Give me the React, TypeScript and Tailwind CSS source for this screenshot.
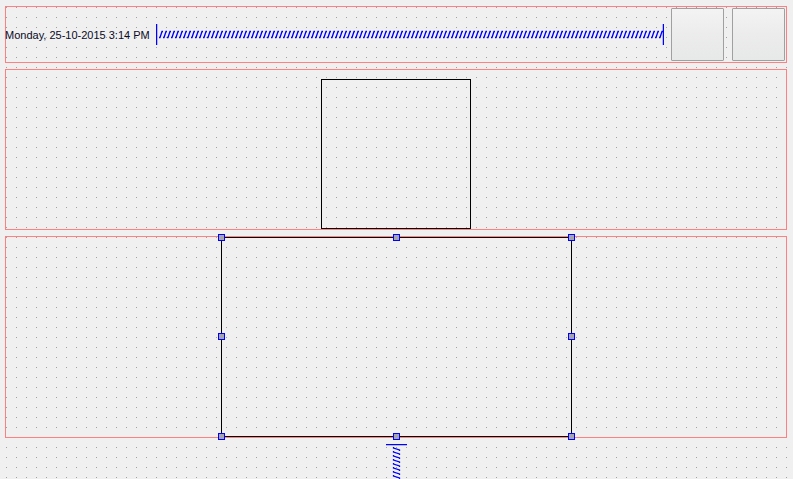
import React from "react";

function HSpring({ width }: { width: number }) {
  const segs: string[] = [];
  for (let x = 3; x < width - 4; x += 4) {
    segs.push(`M${x} 13.5 L${x + 1} 13.5 L${x + 3} 7.5 L${x + 4} 7.5`);
  }
  return (
    <svg width={width} height={21} className="block shrink-0">
      <line x1={0.5} y1={0} x2={0.5} y2={21} stroke="#0000ff" strokeWidth={1.5} />
      <line x1={width - 0.5} y1={0} x2={width - 0.5} y2={21} stroke="#0000ff" strokeWidth={1.5} />
      <path d={segs.join(" ")} stroke="#0000ff" strokeWidth={1.3} fill="none" />
    </svg>
  );
}

function VSpring({ height }: { height: number }) {
  const segs: string[] = [];
  for (let y = 3; y < height; y += 4) {
    segs.push(`M7.5 ${y} L7.5 ${y + 1} L13.5 ${y + 3} L13.5 ${y + 4}`);
  }
  return (
    <svg width={21} height={height} className="block shrink-0">
      <line x1={0} y1={0.5} x2={21} y2={0.5} stroke="#0000ff" strokeWidth={1.5} />
      <path d={segs.join(" ")} stroke="#0000ff" strokeWidth={1.3} fill="none" />
    </svg>
  );
}

function Handle({ className }: { className: string }) {
  return (
    <div
      className={`absolute w-[7px] h-[7px] border border-[#0000ff] bg-[#a4a4ac] ${className}`}
    />
  );
}

function ToolButton() {
  return (
    <div className="w-[53px] h-[53px] shrink-0 border border-[#a0a0a0] rounded-[1px] bg-[linear-gradient(#f3f3f3,#ececec_50%,#e7e8e8)]" />
  );
}

export default function App() {
  return (
    <div
      className="w-[793px] h-[479px] overflow-hidden flex flex-col pt-[6px] px-[5px] gap-[6px] bg-[#f0f0f0] bg-[linear-gradient(90deg,transparent_1px,#f0f0f0_1px),linear-gradient(#a0a0a0_1px,#f0f0f0_1px)] bg-[size:10px_10px] bg-[position:6px_7px]"
      style={{ fontFamily: '"Liberation Sans", Arial, sans-serif' }}
    >
      {/* Frame 1 */}
      <div className="w-[782px] h-[57px] shrink-0 border border-[#ff8080] flex items-center">
        <div className="w-[150px] shrink-0 ml-[-1px] mr-[1px] text-[11px] leading-[14px] text-[#0a0a28] whitespace-nowrap">
          Monday, 25-10-2015 3:14 PM
        </div>
        <HSpring width={508} />
        <div className="ml-[7px] flex gap-[8px] mr-[1px]">
          <ToolButton />
          <ToolButton />
        </div>
      </div>

      {/* Frame 2 */}
      <div className="w-[782px] h-[161px] shrink-0 border border-[#ff8080] flex justify-center items-end">
        <div className="w-[150px] h-[150px] border border-black" />
      </div>

      {/* Frame 3 */}
      <div className="w-[782px] h-[202px] shrink-0 border border-[#ff8080] flex">
        <div className="relative ml-[215px] w-[351px] h-[200px] border border-black">
          <Handle className="left-[-4px] top-[-4px]" />
          <Handle className="left-[171px] top-[-4px]" />
          <Handle className="right-[-4px] top-[-4px]" />
          <Handle className="left-[-4px] top-[95px]" />
          <Handle className="right-[-4px] top-[95px]" />
          <Handle className="left-[-4px] bottom-[-4px]" />
          <Handle className="left-[171px] bottom-[-4px]" />
          <Handle className="right-[-4px] bottom-[-4px]" />
        </div>
      </div>

      {/* Vertical spacer */}
      <div className="flex">
        <div className="ml-[381px]">
          <VSpring height={40} />
        </div>
      </div>
    </div>
  );
}
